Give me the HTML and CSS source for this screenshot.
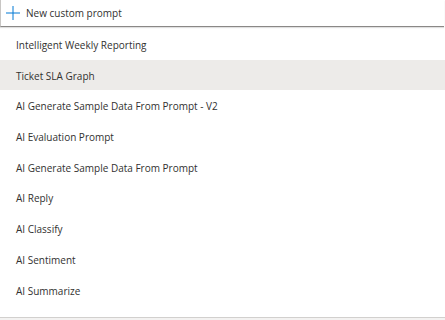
FILE: index.html
```html
<!DOCTYPE html>
<html>
<head>
<meta charset="utf-8">
<link rel="stylesheet" href="styles.css">
</head>
<body>
<div class="panel">
  <div class="header">
    <svg class="plus" width="14" height="14" viewBox="0 0 14 14"><path d="M7 0V14M0 7H14" stroke="#0078d4" stroke-width="1" fill="none"/></svg>
    <span class="header-text">New custom prompt</span>
  </div>
  <ul class="list">
    <li class="item">Intelligent Weekly Reporting</li>
    <li class="item selected">Ticket SLA Graph</li>
    <li class="item">AI Generate Sample Data From Prompt - V2</li>
    <li class="item">AI Evaluation Prompt</li>
    <li class="item">AI Generate Sample Data From Prompt</li>
    <li class="item">AI Reply</li>
    <li class="item">AI Classify</li>
    <li class="item">AI Sentiment</li>
    <li class="item">AI Summarize</li>
  </ul>
  <div class="footer"></div>
</div>
</body>
</html>
```
FILE: styles.css
```css
html, body {
  margin: 0;
  padding: 0;
  background: #ffffff;
}
body {
  font-family: "Open Sans", "Noto Sans", sans-serif;
  color: #323130;
  width: 445px;
  height: 320px;
  overflow: hidden;
}
.panel {
  display: flex;
  flex-direction: column;
  height: 320px;
}
.header {
  display: flex;
  align-items: center;
  gap: 6px;
  height: 27px;
  padding-left: 5px;
  margin-right: 1px;
  border-left: 1px solid #c8c6c4;
  border-bottom: 1px solid #8a8886;
  box-shadow: 0 1px 1px rgba(0,0,0,0.12);
  box-sizing: border-box;
}
.plus { flex: none; }
.header-text {
  font-size: 10px;
  color: #323130;
}
.list {
  list-style: none;
  margin: 2px 0 0 0;
  padding: 0;
  flex: 1;
  display: flex;
  flex-direction: column;
  gap: 0.7px;
}
.item {
  box-sizing: border-box;
  height: 30px;
  padding-top: 2px;
  line-height: 28px;
  padding-left: 16px;
  font-size: 10px;
  color: #323130;
}
.item.selected {
  background: #edebe9;
}
.footer {
  height: 2px;
  border-top: 1px solid #d2d0ce;
  background: #f3f2f1;
}
```
